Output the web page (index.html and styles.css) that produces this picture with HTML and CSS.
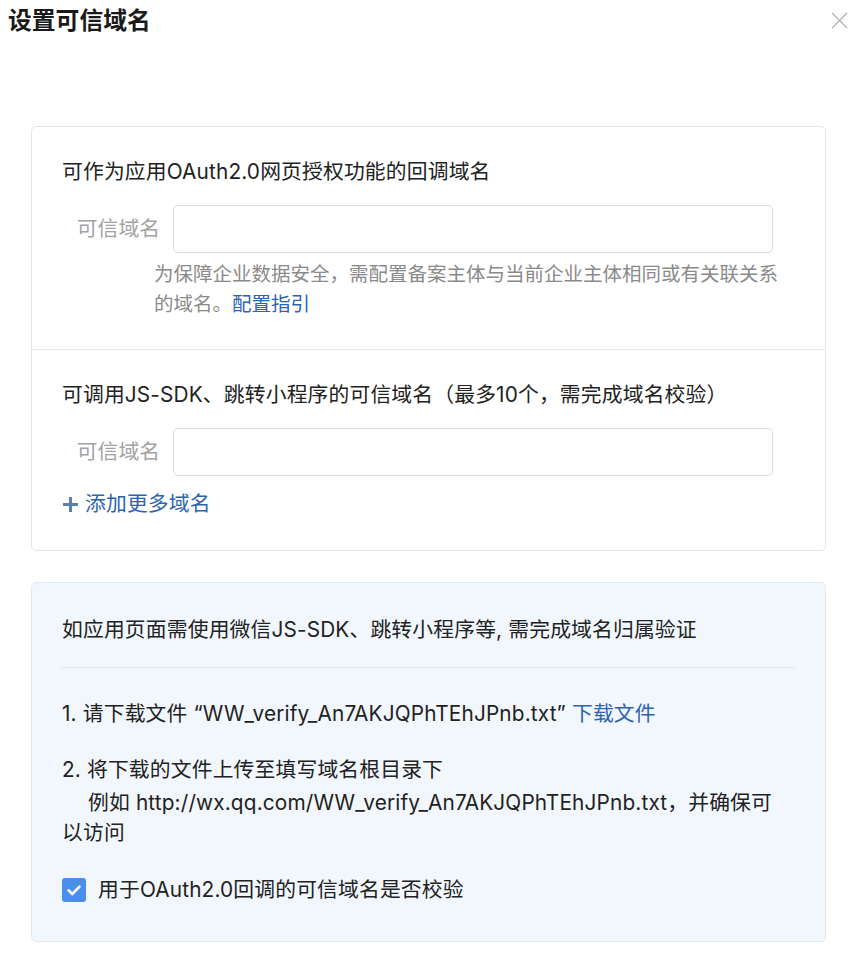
FILE: index.html
```html
<!DOCTYPE html>
<html lang="zh-CN">
<head>
<meta charset="utf-8">
<title>设置可信域名</title>
<link rel="stylesheet" href="styles.css">
</head>
<body>
<div class="dialog">
  <div class="dialog-header">
    <h1 class="dialog-title">设置可信域名</h1>
    <span class="close-btn" aria-label="关闭">
      <svg width="17" height="17" viewBox="0 0 17 17"><path d="M1 1 L16 16 M16 1 L1 16" stroke="#b3b3b3" stroke-width="1.4" fill="none"/></svg>
    </span>
  </div>

  <div class="card">
    <div class="section">
      <div class="section-title">可作为应用OAuth2.0网页授权功能的回调域名</div>
      <div class="field-row">
        <label class="field-label">可信域名</label>
        <input class="field-input" type="text">
      </div>
      <div class="help-text">为保障企业数据安全，需配置备案主体与当前企业主体相同或有关联关系的域名。<a class="link" href="#">配置指引</a></div>
    </div>
    <div class="section section-second">
      <div class="section-title">可调用JS-SDK、跳转小程序的可信域名（最多10个，需完成域名校验）</div>
      <div class="field-row">
        <label class="field-label">可信域名</label>
        <input class="field-input" type="text">
      </div>
      <a class="add-more" href="#">
        <svg class="plus-icon" width="17" height="17" viewBox="0 0 17 17"><path d="M8.5 1 V16 M1 8.5 H16" stroke="#5a7fae" stroke-width="3" fill="none"/></svg>
        <span>添加更多域名</span>
      </a>
    </div>
  </div>

  <div class="card card-info">
    <div class="info-head">如应用页面需使用微信JS-SDK、跳转小程序等, 需完成域名归属验证</div>
    <div class="info-body">
      <div class="step step-one">1. 请下载文件 “WW_verify_An7AKJQPhTEhJPnb.txt” <a class="link" href="#">下载文件</a></div>
      <div class="step step-two">
        <div>2. 将下载的文件上传至填写域名根目录下</div>
        <div class="step-example">例如 http://wx.qq.com/WW_verify_An7AKJQPhTEhJPnb.txt，并确保可以访问</div>
      </div>
      <label class="check-row">
        <span class="checkbox">
          <svg width="24" height="24" viewBox="0 0 24 24"><path d="M6.5 12.3 L10.3 16 L17.5 8.6" stroke="#fff" stroke-width="2.6" fill="none" stroke-linecap="round" stroke-linejoin="round"/></svg>
        </span>
        <span>用于OAuth2.0回调的可信域名是否校验</span>
      </label>
    </div>
  </div>
</div>
</body>
</html>
```

FILE: styles.css
```css
* { box-sizing: border-box; }

html, body {
  margin: 0;
  padding: 0;
  background: #ffffff;
}

body {
  font-family: "Inter", "Noto Sans CJK SC", sans-serif;
  font-size: 20.8px;
  letter-spacing: 0.15px;
  color: #222222;
}

.dialog {
  width: 863px;
  padding: 0 0 24px 0;
}

.dialog-header {
  display: flex;
  justify-content: space-between;
  align-items: flex-start;
  padding: 0 15px 0 8px;
  height: 38px;
}

.dialog-title {
  margin: 0;
  font-family: "Noto Sans CJK SC", sans-serif;
  font-size: 23.8px;
  font-weight: 700;
  letter-spacing: 0;
  line-height: 38px;
  color: #1a1a1a;
}

.close-btn {
  display: block;
  margin-top: 9px;
  width: 17px;
  height: 17px;
}

.card {
  width: 795px;
  margin-left: 31px;
  border: 1px solid #e6e6e6;
  border-radius: 5px;
  background: #ffffff;
}

.dialog-header + .card {
  margin-top: 88px;
}

.section {
  padding: 30px 30px 30px 30px;
}

.section-second {
  border-top: 1px solid #e6e6e6;
  padding-bottom: 31px;
}

.section-title {
  line-height: 30px;
  color: #222222;
}

.field-row {
  display: flex;
  align-items: center;
  margin-top: 18px;
}

.field-label {
  width: 98px;
  flex: none;
  text-align: right;
  color: #a3a3a3;
  line-height: 30px;
  letter-spacing: 0;
}

.field-input {
  width: 600px;
  height: 48px;
  margin-left: 13px;
  border: 1px solid #dcdcdc;
  border-radius: 5px;
  background: #ffffff;
  font: inherit;
  padding: 0 12px;
  outline: none;
}

.help-text {
  margin-top: 6px;
  padding-left: 92px;
  font-size: 19.5px;
  letter-spacing: 0;
  line-height: 30px;
  color: #8a8a8a;
}

.link {
  color: #2e63ae;
  text-decoration: none;
}

.add-more {
  display: inline-flex;
  align-items: center;
  margin-top: 13px;
  line-height: 30px;
  color: #2e63ae;
  text-decoration: none;
}

.plus-icon {
  margin-right: 6px;
  flex: none;
}

.card-info {
  margin-top: 31px;
  background: #f1f7fd;
  border-color: #e2e8ef;
  padding: 32px 30px 36px 30px;
}

.info-head {
  line-height: 30px;
  padding-bottom: 22px;
  border-bottom: 1px solid #dfe6ee;
}

.info-body {
  padding-top: 31px;
  padding-right: 14px;
}

.step {
  line-height: 30px;
}

.step-two {
  margin-top: 26px;
}

.step-example {
  text-indent: 26px;
  margin-top: 3px;
}

.check-row {
  display: flex;
  align-items: center;
  gap: 12px;
  margin-top: 27px;
  line-height: 30px;
}

.checkbox {
  width: 24px;
  height: 24px;
  flex: none;
  border-radius: 3px;
  background: #4a8fe9;
  display: flex;
}
```
